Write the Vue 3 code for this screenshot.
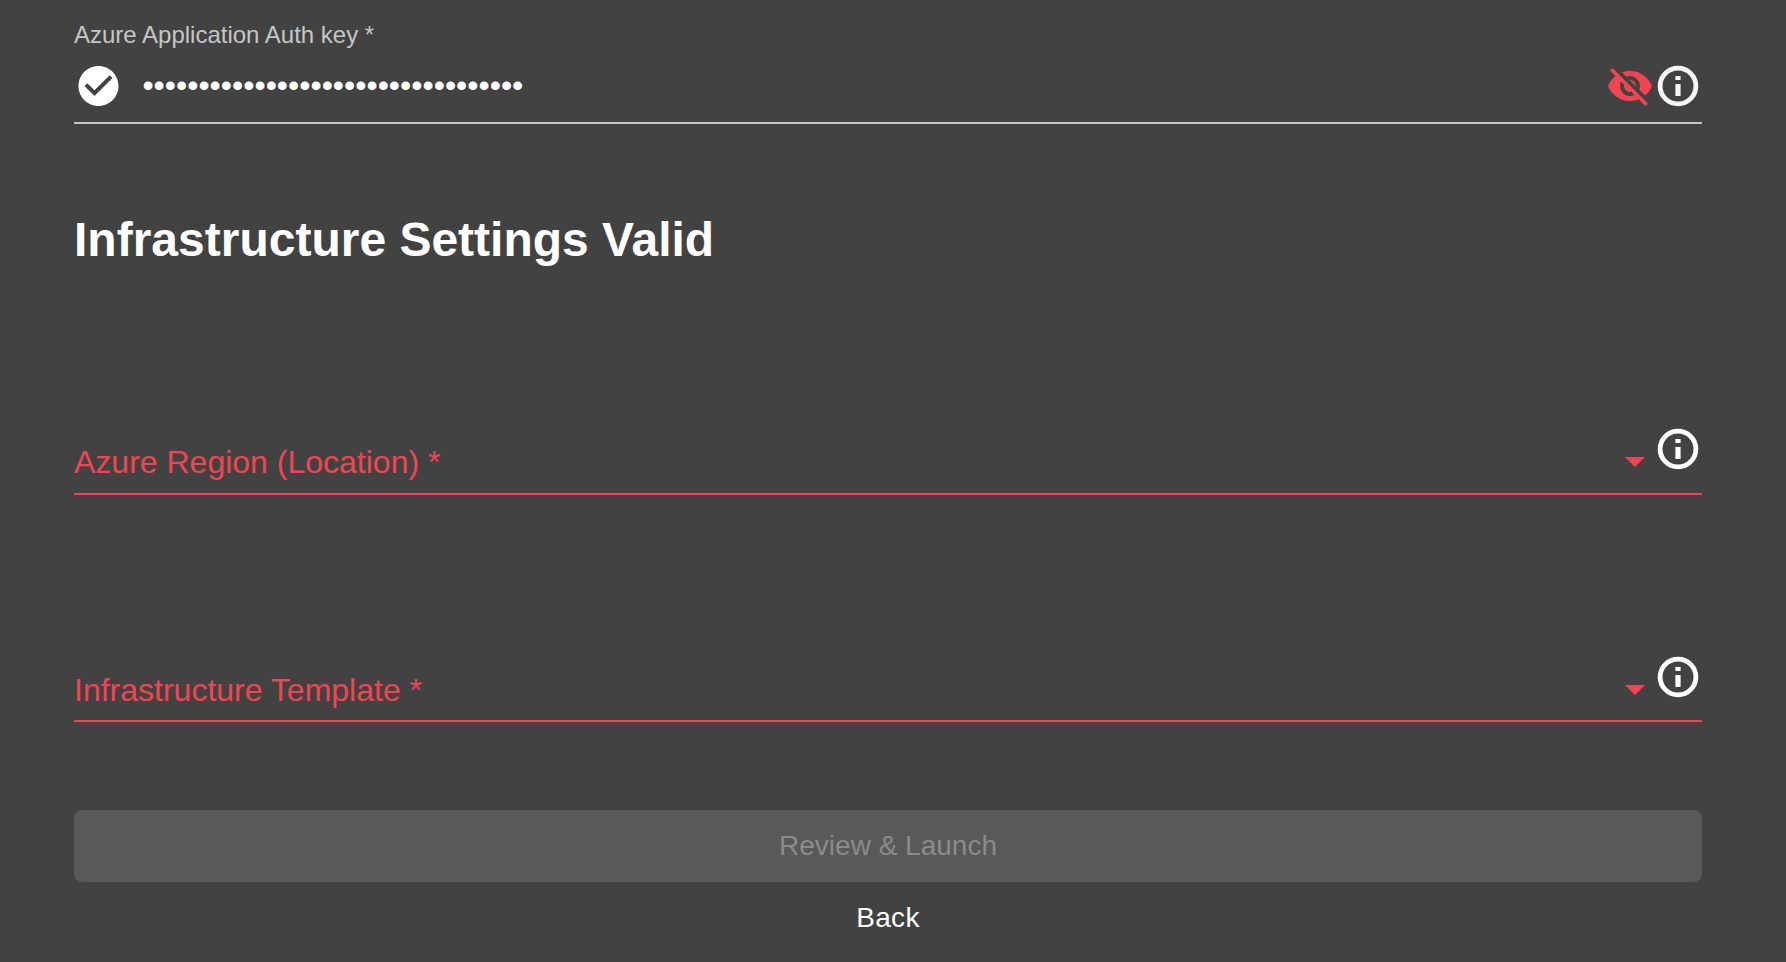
<script setup>
const maskedKey = '•'.repeat(34)

const selects = [
  { id: 'region', label: 'Azure Region (Location) *' },
  { id: 'template', label: 'Infrastructure Template *' },
]
const infoDot = 'M10.700 7h2.600v2h-2.600zM10.700 11h2.600v6h-2.600z'
</script>

<template>
  <main class="page">
    <section class="key-field">
      <div class="key-label">Azure Application Auth key *</div>
      <div class="key-row">
        <svg class="icon check" viewBox="0 0 24 24">
          <path d="M12 2C6.480 2 2 6.480 2 12s4.480 10 10 10 10-4.480 10-10S17.520 2 12 2zm-2 15l-5-5 1.410-1.410L10 14.170l7.590-7.590L19 8l-9 9z" />
        </svg>
        <span class="dots">{{ maskedKey }}</span>
        <svg class="icon eye" viewBox="0 0 24 24">
          <path d="M12 7c2.760 0 5 2.240 5 5 0 .65-.13 1.260-.36 1.830l2.920 2.920c1.510-1.260 2.700-2.890 3.430-4.750-1.730-4.390-6-7.500-11-7.500-1.400 0-2.740.25-3.980.7l2.160 2.160C10.740 7.130 11.350 7 12 7zM2 4.270l2.280 2.280.46.46C3.080 8.300 1.780 10.020 1 12c1.730 4.390 6 7.500 11 7.500 1.550 0 3.030-.3 4.380-.84l.42.42L19.730 22 21 20.730 3.270 3 2 4.270zM7.530 9.800l1.550 1.550c-.05.21-.08.43-.08.65 0 1.660 1.340 3 3 3 .22 0 .44-.03.65-.08l1.550 1.550c-.67.33-1.410.53-2.200.53-2.760 0-5-2.240-5-5 0-.79.2-1.530.53-2.200zm4.310-.78l3.150 3.150.02-.16c0-1.660-1.340-3-3-3l-.17.01z" />
        </svg>
        <svg class="icon key-info" viewBox="0 0 24 24">
          <circle class="ring" cx="12" cy="12" r="8.950" />
          <path :d="infoDot" />
        </svg>
      </div>
    </section>

    <h1 class="heading">Infrastructure Settings Valid</h1>

    <section v-for="s in selects" :key="s.id" class="select" :class="s.id">
      <span class="select-label">{{ s.label }}</span>
      <span class="caret"></span>
      <svg class="icon select-info" viewBox="0 0 24 24">
        <circle class="ring" cx="12" cy="12" r="8.950" />
        <path :d="infoDot" />
      </svg>
    </section>

    <button class="launch" disabled>Review &amp; Launch</button>
    <button class="back">Back</button>
  </main>
</template>

<style>
html,
body {
  background: #424242;
}
</style>

<style scoped>
.page {
  box-sizing: border-box;
  height: 962px;
  padding: 21px 84px 0 74px;
  overflow: hidden;
  display: flex;
  flex-direction: column;
  background: #424242;
  color: #fff;
  font-family: "Liberation Sans", Arial, sans-serif;
}
.key-field {
  box-sizing: border-box;
  height: 103px;
  border-bottom: 2px solid #c6c6c6;
}
.key-label {
  font-size: 24px;
  line-height: 28px;
  color: #c6c6c6;
}
.key-row {
  display: flex;
  align-items: center;
  height: 48px;
  margin-top: 13px;
}
.icon {
  flex: none;
  width: 48px;
  height: 48px;
  fill: currentColor;
}
.check {
  width: 49px;
}
.ring {
  fill: none;
  stroke: currentColor;
  stroke-width: 2.4;
}
.dots {
  flex: 1;
  margin-left: 19.4px;
  font-size: 32px;
  line-height: 46px;
  padding-bottom: 2px;
}
.eye {
  color: #f24452;
}
.key-info {
  color: #f3f5f9;
}
.heading {
  margin: 89px 0 0;
  font-size: 48px;
  line-height: 54px;
  font-weight: 700;
}
.select {
  box-sizing: border-box;
  display: flex;
  align-items: flex-end;
  height: 70px;
  border-bottom: 2px solid #f24452;
  color: #f24452;
}
.region {
  margin-top: 158px;
}
.template {
  margin-top: 157px;
}
.select-label {
  flex: 1;
  font-size: 32px;
  line-height: 36px;
  padding-bottom: 13px;
}
.caret {
  border: 10px solid transparent;
  border-top-color: currentColor;
  border-bottom: 0;
  margin: 0 9px 26px 0;
}
.select-info {
  color: #fff;
  margin-bottom: 20px;
}
.template .select-label {
  padding-bottom: 12px;
}
.template .caret {
  margin-bottom: 25px;
}
.template .select-info {
  margin-bottom: 19px;
}
.launch,
.back {
  width: 100%;
  height: 72px;
  padding: 0;
  border: 0;
  border-radius: 8px;
  background: transparent;
  color: #fff;
  font-family: inherit;
  font-size: 28px;
  line-height: 72px;
}
.launch {
  margin-top: 88px;
  background: #595959;
  color: #8b8b8b;
}
.back {
  letter-spacing: 0.3px;
}
</style>
